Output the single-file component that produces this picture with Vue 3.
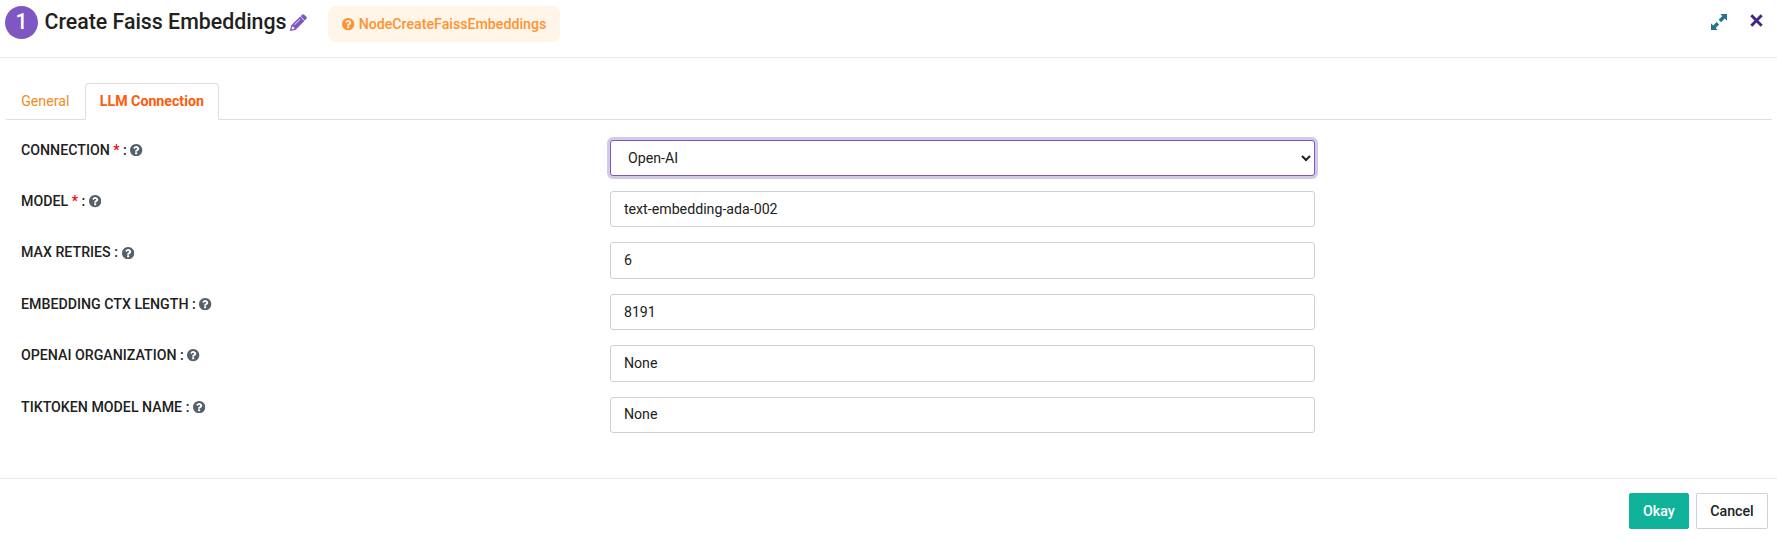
<script setup>
import { ref } from 'vue'

const QUESTION = 'M1024 1376v-192q0-14-9-23t-23-9h-192q-14 0-23 9t-9 23v192q0 14 9 23t23 9h192q14 0 23-9t9-23zm256-672q0-88-55.500-163t-138.500-116-170-41q-243 0-371 213-15 24 8 42l132 100q7 6 19 6 16 0 25-12 53-68 86-92 34-24 86-24 48 0 85.500 26t37.500 59q0 38-20 61t-68 45q-63 28-115.500 86.500t-52.500 125.500v36q0 14 9 23t23 9h192q14 0 23-9t9-23q0-19 21.500-49.500t54.500-49.500q32-18 49-28.500t46-35 44.500-48 28-60.500 12.500-81zm384 192q0 209-103 385.500t-279.500 279.500-385.500 103-385.500-103-279.500-279.500-103-385.500 103-385.500 279.500-279.500 385.500-103 385.500 103 279.500 279.500 103 385.500z'

const connection = ref('Open-AI')
const fields = ref([
  { label: 'MODEL', required: true, value: 'text-embedding-ada-002' },
  { label: 'MAX RETRIES', value: '6' },
  { label: 'EMBEDDING CTX LENGTH', value: '8191' },
  { label: 'OPENAI ORGANIZATION', value: 'None' },
  { label: 'TIKTOKEN MODEL NAME', value: 'None' },
])
</script>

<template>
  <div class="dialog">
    <header class="head">
      <span class="step">1</span>
      <h1 class="title">Create Faiss Embeddings</h1>
      <svg class="pencil" viewBox="0 0 17 17"><path fill-rule="evenodd" d="M12.100.700Q13.200-.400 14.300.700L16.300 2.700Q17.400 3.800 16.300 4.900L14.800 6.400 10.600 2.200ZM10.100 2.600L14.400 6.900 5.500 15.900.300 17Q0 17 0 16.700L1.100 11.500ZM9.900 5L4.300 10.600 4.700 11 10.300 5.400ZM2.300 12.600L1.600 14.700 2.300 15.400 4.400 14.700V13.600H3.300V12.600Z" /></svg>
      <span class="tag">
        <svg class="q" viewBox="128 128 1536 1536"><path :d="QUESTION" /></svg>
        NodeCreateFaissEmbeddings
      </span>
      <div class="tools">
        <svg class="expand" viewBox="0 0 16 16"><path d="M9.300 0H16v6.700l-2.200-2.200-3.700 3.700-2.500-2.500 3.700-3.700zM0 9.300l2.200 2.200 3.400-3.400 2.500 2.500-3.400 3.400L6.700 16H0z" /></svg>
        <svg class="close" viewBox="0 0 12 12"><path d="M1.200 1.200l9.600 9.600M10.800 1.200l-9.600 9.600" /></svg>
      </div>
    </header>

    <nav class="tabs">
      <a class="tab">General</a>
      <a class="tab active">LLM Connection</a>
    </nav>

    <main class="form">
      <div class="row">
        <label class="label">CONNECTION <b>*</b> : <svg class="q" viewBox="128 128 1536 1536"><path :d="QUESTION" /></svg></label>
        <select v-model="connection" class="control focused">
          <option>Open-AI</option>
        </select>
      </div>
      <div v-for="f in fields" :key="f.label" class="row">
        <label class="label">{{ f.label }} <b v-if="f.required">*</b>{{ f.required ? ' :' : ':' }} <svg class="q" viewBox="128 128 1536 1536"><path :d="QUESTION" /></svg></label>
        <input v-model="f.value" class="control" type="text">
      </div>
    </main>

    <footer class="foot">
      <button class="btn okay">Okay</button>
      <button class="btn cancel">Cancel</button>
    </footer>
  </div>
</template>

<style>
body { background: #fff; }
</style>

<style scoped>
.dialog {
  box-sizing: border-box;
  height: 541px;
  display: flex;
  flex-direction: column;
  font-family: Roboto, sans-serif;
  font-size: 14.200px;
  line-height: 21.6px;
  color: #212121;
}
.dialog * { box-sizing: border-box; }
.head {
  display: flex;
  align-items: flex-start;
  height: 58px;
  padding: 6px 10px 0 5px;
  border-bottom: 1px solid #e9e9eb;
}
.step {
  width: 33px;
  height: 33px;
  border-radius: 50%;
  background: #7e57c2;
  color: #fff;
  font-size: 21.300px;
  font-weight: 500;
  line-height: 31px;
  text-align: center;
}
.title {
  margin: 0 0 0 6.500px;
  font-size: 21.330px;
  font-weight: 500;
  line-height: 31px;
  white-space: nowrap;
}
.pencil { width: 17px; height: 17px; margin: 7.500px 0 0 3.600px; fill: #7e57c2; }
.tag {
  display: flex;
  align-items: center;
  gap: 4px;
  height: 36px;
  margin-left: 21.200px;
  padding: 1px 14px 0;
  border-radius: 7px;
  background: #fff5e9;
  color: #ff9330;
  font-weight: 500;
}
.q { width: 12.300px; height: 12.300px; fill: currentColor; }
.tools { display: flex; margin-left: auto; }
.expand { width: 16px; height: 16px; margin: 7.500px 23.200px 0 0; fill: #26738f; }
.close {
  width: 13px;
  height: 13px;
  margin: 8px 4px 0 0;
  fill: none;
  stroke: #3f2785;
  stroke-width: 2.700;
}
.tabs {
  display: flex;
  height: 37px;
  margin: 25px 5px 0 6px;
  border-bottom: 1px solid #dfdfe3;
}
.tab { height: 37px; padding: 7px 14.200px 0; border: 1px solid transparent; color: #f08c1c; }
.tab.active {
  border-color: #dfdfe3;
  border-bottom-color: #fff;
  border-radius: 4px 4px 0 0;
  background: #fff;
  color: #ff5a0a;
  font-weight: 700;
}
.form { display: flex; flex-direction: column; gap: 15px; margin: 19.600px 6px 0; }
.row {
  display: grid;
  grid-template-columns: 33.333% 41.667%;
  height: 36.400px;
}
.label { padding-left: 15px; font-weight: 500; }
.label b { color: #f00; font-weight: 500; }
.label .q { vertical-align: -1.600px; fill: #56606b; }
.control {
  height: 36.400px;
  margin: 0 15px 0 15.600px;
  padding: 6px 13px;
  border: 1px solid #cbd0db;
  border-radius: 3px;
  background: #fff;
  color: #212121;
  font: inherit;
  outline: none;
}
input.control { padding-bottom: 6.900px; }
.focused { border-color: #7e57c2; box-shadow: 0 0 0 3px #d3cbe5; }
.foot {
  display: flex;
  justify-content: flex-end;
  gap: 7px;
  height: 63px;
  margin-top: auto;
  padding: 14px 9px 0 0;
  border-top: 1px solid #e9e9eb;
}
.btn {
  height: 36px;
  padding: 1px 13.300px 0;
  border: 1px solid #cbd0db;
  border-radius: 2px;
  background: #fff;
  color: #212121;
  font: inherit;
  font-weight: 500;
}
.okay { border-color: #10b29a; background: #10b29a; color: #fff; }
</style>
